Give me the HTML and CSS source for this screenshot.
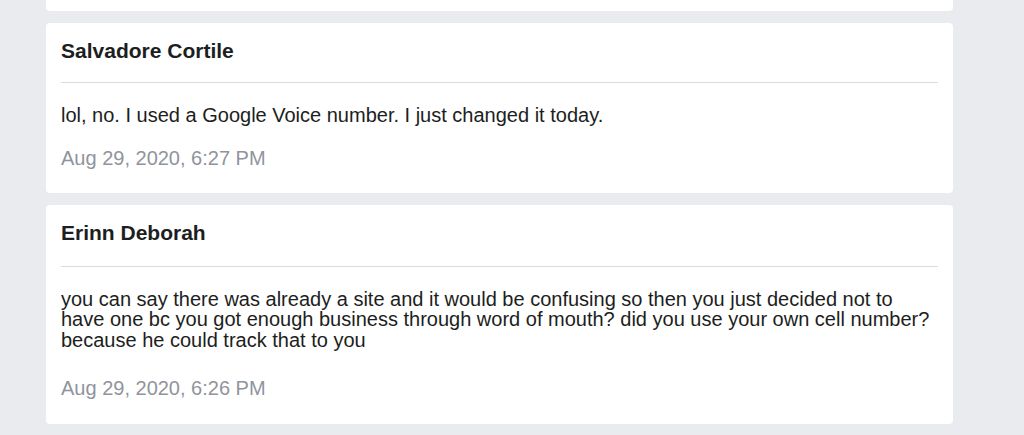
FILE: index.html
```html
<!DOCTYPE html>
<html lang="en">
<head>
  <meta charset="UTF-8" />
  <meta name="viewport" content="width=device-width, initial-scale=1.0" />
  <title>Messages</title>
  <link rel="stylesheet" href="styles.css">
</head>
<body>
  <div class="thread">
    <div class="message-card message-card--cut"></div>

    <div class="message-card">
      <div class="message-author">Salvadore Cortile</div>
      <p class="message-text">lol, no. I used a Google Voice number. I just changed it today.</p>
      <div class="message-date">Aug 29, 2020, 6:27 PM</div>
    </div>

    <div class="message-card message-card--long">
      <div class="message-author">Erinn Deborah</div>
      <p class="message-text">you can say there was already a site and it would be confusing so then you just decided not to have one bc you got enough business through word of mouth? did you use your own cell number? because he could track that to you</p>
      <div class="message-date">Aug 29, 2020, 6:26 PM</div>
    </div>
  </div>
</body>
</html>
```
FILE: styles.css
```css
* {
  margin: 0;
  padding: 0;
  box-sizing: border-box;
}

body {
  font-family: "Liberation Sans", Arial, Helvetica, sans-serif;
  background: #e9ebee;
  color: #1c1e21;
  min-height: 100vh;
}

.thread {
  width: 907px;
  margin-left: 46px;
  display: flex;
  flex-direction: column;
  gap: 12px;
}

.message-card {
  background: #fff;
  border-radius: 4px;
  padding: 16px 15px 24px;
}

.message-card--cut {
  height: 11px;
  padding: 0;
  border-radius: 0 0 4px 4px;
}

.message-author {
  font-size: 21px;
  font-weight: bold;
  line-height: 24px;
  padding-bottom: 19px;
  border-bottom: 1px solid #d8dbdf;
}

.message-text {
  font-size: 20px;
  line-height: 20.75px;
  margin-top: 22px;
}

.message-date {
  font-size: 20px;
  line-height: 20.75px;
  margin-top: 22px;
  color: #90949c;
}

/* longer messages get a bit more breathing room */
.message-card--long {
  padding-bottom: 25px;
}

.message-card--long .message-author {
  padding-bottom: 21px;
}

.message-card--long .message-date {
  margin-top: 27px;
}
```
